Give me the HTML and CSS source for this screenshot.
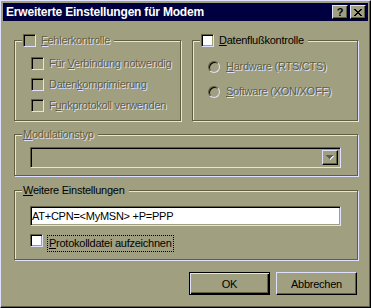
FILE: index.html
```html
<!DOCTYPE html>
<html lang="de">

<head>
  <meta charset="UTF-8">
  <title>Erweiterte Einstellungen für Modem</title>
  <link rel="stylesheet" href="styles.css">
</head>

<body>
  <div class="window">
    <div class="titlebar">
      <span class="title">Erweiterte Einstellungen für Modem</span>
      <div class="caption_buttons">
        <span class="cap_btn help">?</span>
        <span class="cap_btn close">
          <svg width="8" height="7" viewBox="0 0 8 7" shape-rendering="crispEdges">
            <path d="M0 0h2v1h-2zM6 0h2v1h-2zM1 1h2v1h-2zM5 1h2v1h-2zM2 2h4v1h-4zM3 3h2v1h-2zM2 4h4v1h-4zM1 5h2v1h-2zM5 5h2v1h-2zM0 6h2v1h-2zM6 6h2v1h-2z" fill="#000"/>
          </svg>
        </span>
      </div>
    </div>

    <div class="client">
      <div class="row">
        <div class="group group_error">
          <div class="legend">
            <span class="check"></span>
            <span class="off"><u>F</u>ehlerkontrolle</span>
          </div>
          <div class="options">
            <div class="option"><span class="check"></span><span class="off">Für <u>V</u>erbindung notwendig</span></div>
            <div class="option"><span class="check"></span><span class="off">Daten<u>k</u>omprimierung</span></div>
            <div class="option"><span class="check"></span><span class="off">F<u>u</u>nkprotokoll verwenden</span></div>
          </div>
        </div>

        <div class="group group_flow">
          <div class="legend">
            <span class="check on"></span>
            <span><u>D</u>atenflußkontrolle</span>
          </div>
          <div class="radios">
            <div class="option"><span class="radio"></span><span class="off"><u>H</u>ardware (RTS/CTS)</span></div>
            <div class="option"><span class="radio"></span><span class="off"><u>S</u>oftware (XON/XOFF)</span></div>
          </div>
        </div>
      </div>

      <div class="group group_modulation">
        <div class="legend"><span class="off"><u>M</u>odulationstyp</span></div>
        <div class="combo">
          <span class="combo_btn">
            <svg width="8" height="5" viewBox="0 0 8 5" shape-rendering="crispEdges">
              <path d="M1 1h7v1h-1v1h-1v1h-1v1h-1v-1h-1v-1h-1v-1h-1z" fill="#e0e0ff"/>
              <path d="M0 0h7v1h-1v1h-1v1h-1v1h-1v-1h-1v-1h-1v-1h-1z" fill="#606040"/>
            </svg>
          </span>
        </div>
      </div>

      <div class="group group_more">
        <div class="legend"><span><u>W</u>eitere Einstellungen</span></div>
        <div class="edit">AT+CPN=&lt;MyMSN&gt; +P=PPP</div>
        <div class="log_row">
          <span class="check on"></span>
          <span class="focus"><u>P</u>rotokolldatei aufzeichnen</span>
        </div>
      </div>

      <div class="button_row">
        <button class="btn default">OK</button>
        <button class="btn">Abbrechen</button>
      </div>
    </div>
  </div>
</body>

</html>
```

FILE: styles.css
```css
html,
body {
  width: 100%;
  height: 100%;
  overflow: hidden;
}

body {
  margin: 0;
  background: #a0a080;
  font-family: 'Liberation Sans', Arial, sans-serif;
  font-size: 11px;
  letter-spacing: -0.25px;
  color: #000;
}

.window {
  width: 371px;
  height: 308px;
  box-sizing: border-box;
  padding: 2px;
  background: #a0a080;
  border: 1px solid #000;
  border-top-color: #e0e0ff;
  border-left-color: #e0e0ff;
  box-shadow: inset -1px -1px 0 #606040;
}

/* title bar */
.titlebar {
  height: 18px;
  display: flex;
  align-items: center;
  justify-content: space-between;
  background: #000040;
  padding-left: 3px;
}

.title {
  color: #fff;
  font-weight: bold;
  font-size: 12px;
  letter-spacing: -0.2px;
}

.caption_buttons {
  display: flex;
  gap: 2px;
  margin-right: 2px;
}

.cap_btn {
  width: 16px;
  height: 14px;
  box-sizing: border-box;
  display: flex;
  align-items: center;
  justify-content: center;
  background: #a0a080;
  border: 1px solid #000;
  border-top-color: #e0e0ff;
  border-left-color: #e0e0ff;
  box-shadow: inset -1px -1px 0 #606040;
  font-weight: bold;
  font-size: 11px;
  line-height: 12px;
}

/* client area */
.client {
  padding: 19px 10px 0 11px;
}

.row {
  display: flex;
  gap: 11px;
}

.group {
  box-sizing: border-box;
  border: 1px solid #606040;
  box-shadow: 1px 1px 0 #e0e0ff, inset 1px 1px 0 #e0e0ff;
}

.legend {
  display: flex;
  align-items: center;
  gap: 5px;
  width: fit-content;
  height: 13px;
  margin: -7px 0 0 7px;
  padding: 0 4px 0 1px;
  background: #a0a080;
  line-height: 13px;
}

.group_error {
  width: 167px;
  height: 81px;
}

.group_flow {
  width: 166px;
  height: 81px;
}

.options {
  display: flex;
  flex-direction: column;
  gap: 8px;
  margin-top: 10px;
  padding-left: 16px;
}

.radios {
  display: flex;
  flex-direction: column;
  gap: 12px;
  margin-top: 13px;
  padding-left: 15px;
}

.option {
  display: flex;
  align-items: center;
  gap: 5px;
  line-height: 13px;
}

.radios .option {
  gap: 6px;
}

.off {
  color: #606040;
  text-shadow: 1px 1px 0 #e0e0ff;
}

/* controls */
.check {
  width: 13px;
  height: 13px;
  box-sizing: border-box;
  flex-shrink: 0;
  background: #a0a080;
  border: 1px solid #e0e0ff;
  border-top-color: #606040;
  border-left-color: #606040;
  box-shadow: inset 1px 1px 0 #000, inset -1px -1px 0 #a0a080;
}

.check.on {
  background: #fff;
}

.radio {
  width: 12px;
  height: 12px;
  box-sizing: border-box;
  flex-shrink: 0;
  border-radius: 50%;
  background: #a0a080;
  border: 1px solid #e0e0ff;
  border-top-color: #606040;
  border-left-color: #606040;
  box-shadow: inset 1px 1px 0 #000;
}

.group_modulation {
  height: 42px;
  margin-top: 13px;
  width: 344px;
}

.combo {
  width: 311px;
  height: 21px;
  box-sizing: border-box;
  margin: 6px 0 0 15px;
  display: flex;
  justify-content: flex-end;
  align-items: stretch;
  padding: 2px;
  background: #a0a080;
  border: 1px solid #e0e0ff;
  border-top-color: #606040;
  border-left-color: #606040;
  box-shadow: inset 1px 1px 0 #000, inset -1px -1px 0 #a0a080;
}

.combo_btn {
  width: 16px;
  box-sizing: border-box;
  display: flex;
  align-items: center;
  justify-content: center;
  border: 1px solid #000;
  border-top-color: #e0e0ff;
  border-left-color: #e0e0ff;
  box-shadow: inset -1px -1px 0 #606040;
}

.group_more {
  height: 70px;
  margin-top: 14px;
  width: 344px;
}

.edit {
  width: 311px;
  height: 20px;
  box-sizing: border-box;
  margin: 9px 0 0 15px;
  padding: 0 0 0 1px;
  background: #fff;
  border: 1px solid #e0e0ff;
  border-top-color: #606040;
  border-left-color: #606040;
  box-shadow: inset 1px 1px 0 #000, inset -1px -1px 0 #a0a080;
  line-height: 18px;
  white-space: pre;
}

.log_row {
  display: flex;
  align-items: flex-start;
  gap: 4px;
  margin: 8px 0 0 15px;
}

.focus {
  margin-top: 1px;
  height: 17px;
  box-sizing: border-box;
  padding: 0 1px;
  border: 1px dotted #000;
  line-height: 14px;
}

/* buttons */
.button_row {
  display: flex;
  justify-content: flex-end;
  gap: 6px;
  margin-top: 12px;
  padding-right: 1px;
}

.btn {
  width: 81px;
  height: 23px;
  box-sizing: border-box;
  padding: 0;
  font-family: 'Liberation Sans', Arial, sans-serif;
  font-size: 11px;
  letter-spacing: -0.25px;
  color: #000;
  background: #a0a080;
  border: 1px solid #000;
  border-top-color: #e0e0ff;
  border-left-color: #e0e0ff;
  box-shadow: inset -1px -1px 0 #606040;
}

.btn.default {
  border-color: #000;
  box-shadow: inset 1px 1px 0 #e0e0ff, inset -1px -1px 0 #000, inset -2px -2px 0 #606040;
}
```
